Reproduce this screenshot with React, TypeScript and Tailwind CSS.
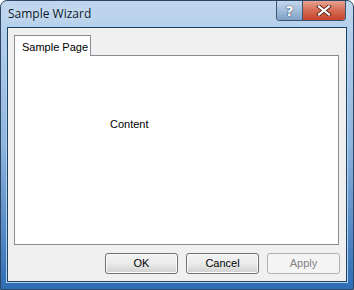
import { useState } from "react";

const dlgFont = { fontFamily: '"Liberation Sans", Arial, sans-serif' };

function CaptionButtons() {
	return (
		<div className="flex h-[20px] mr-[7px] rounded-b-[4px] border border-t-0 border-[#3a5472] overflow-hidden">
			<div className="w-[26px] flex items-center justify-center bg-gradient-to-b from-[#c3d6ec] via-[#a3bedc] to-[#7d9fc6] border-r border-[#3a5472]">
				<span className="text-white font-bold text-[14px] leading-none [text-shadow:0_0_1px_#1f3550,0_0_1px_#1f3550]" style={{ fontFamily: '"DejaVu Sans", sans-serif' }}>
					?
				</span>
			</div>
			<div className="w-[42px] flex items-center justify-center bg-gradient-to-b from-[#e8a493] via-[#d46a52] to-[#c7412a]">
				<svg width="16" height="11" viewBox="0 0 16 11">
					<path d="M3 1.5 L13 9.5 M13 1.5 L3 9.5" stroke="#5a2418" strokeWidth="4" strokeLinecap="square" />
					<path d="M3 1.5 L13 9.5 M13 1.5 L3 9.5" stroke="#ffffff" strokeWidth="2.2" strokeLinecap="square" />
				</svg>
			</div>
		</div>
	);
}

function DlgButton({ label, disabled }: { label: string; disabled?: boolean }) {
	return (
		<button
			disabled={disabled}
			className={
				disabled
					? "w-[73px] h-[21px] rounded-[3px] border border-[#adb2b5] bg-[#f4f4f4] text-[11px] text-[#838383]"
					: "w-[73px] h-[21px] rounded-[3px] border border-[#707070] bg-gradient-to-b from-[#f2f2f2] via-[#ebebeb] to-[#cfcfcf] text-[11px] text-black shadow-[inset_0_0_0_1px_#fcfcfc]"
			}
			style={dlgFont}
		>
			{label}
		</button>
	);
}

export default function App() {
	const [tab] = useState("Sample Page");

	return (
		<div className="w-[354px] h-[290px] flex flex-col rounded-t-[7px] border border-[#2c4766] bg-gradient-to-b from-[#c0d6ee] via-[#8fb4dd] to-[#2e6cb4] overflow-hidden">
			{/* title bar */}
			<div className="h-[26px] flex items-start justify-between">
				<span
					className="pl-[7px] pt-[6px] text-[12px] leading-[14px] text-[#0b1a2c] [text-shadow:0_0_6px_#e8f1fb]"
					style={{ fontFamily: '"Open Sans", "Noto Sans", sans-serif' }}
				>
					Sample Wizard
				</span>
				<CaptionButtons />
			</div>

			{/* client area */}
			<div className="mx-[6px] mb-[7px] flex-1 flex flex-col border border-[#23405f] bg-[#f0f0f0] shadow-[0_0_0_1px_#a8d4f4]" style={dlgFont}>
				<div className="mt-[7px] ml-[6px] mr-[7px] flex flex-col h-[210px]">
					<div className="flex">
						<div className="w-[77px] h-[21px] -mb-px bg-white border border-b-0 border-[#898c95] pl-[7px] pt-[3px] text-[11px] text-black relative z-10">
							{tab}
						</div>
					</div>
					<div className="flex-1 bg-white border border-[#898c95] pl-[95px] pt-[60px] text-[11px] text-black">
						Content
					</div>
				</div>
				<div className="mt-[8px] mr-[6px] flex justify-end gap-[8px]">
					<DlgButton label="OK" />
					<DlgButton label="Cancel" />
					<DlgButton label="Apply" disabled />
				</div>
			</div>
		</div>
	);
}
